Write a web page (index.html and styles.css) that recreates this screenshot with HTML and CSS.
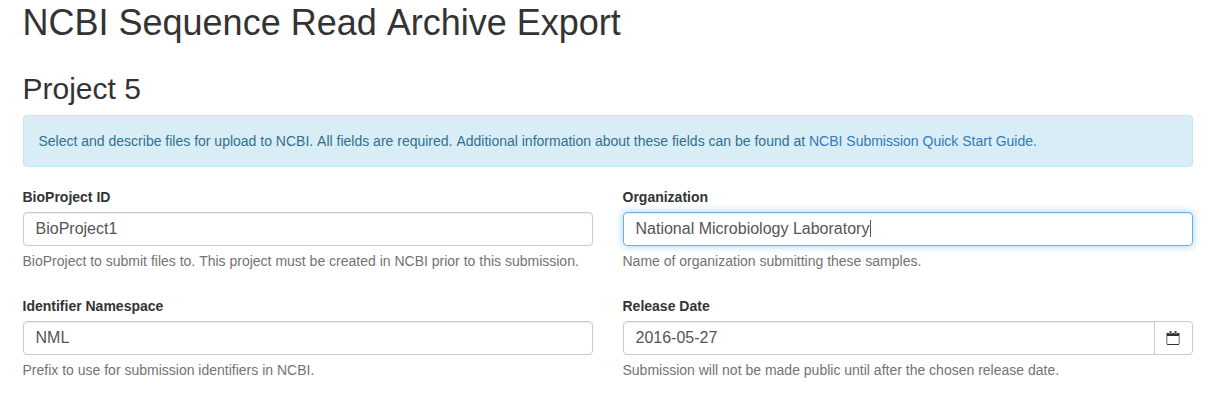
FILE: index.html
```html
<!DOCTYPE html>
<html lang="en">
<head>
<meta charset="utf-8">
<title>NCBI Sequence Read Archive Export</title>
<link rel="stylesheet" href="styles.css">
</head>
<body>
<main class="page">
  <h1>NCBI Sequence Read Archive Export</h1>
  <h2>Project 5</h2>
  <div class="alert">Select and describe files for upload to NCBI. All fields are required. Additional information about these fields can be found at <a href="#">NCBI Submission Quick Start Guide.</a></div>
  <form class="fields">
    <div class="group">
      <label>BioProject ID</label>
      <div class="control">BioProject1</div>
      <p class="help">BioProject to submit files to. This project must be created in NCBI prior to this submission.</p>
    </div>
    <div class="group">
      <label>Organization</label>
      <div class="control focused">National Microbiology Laboratory<span class="caret"></span></div>
      <p class="help">Name of organization submitting these samples.</p>
    </div>
    <div class="group">
      <label>Identifier Namespace</label>
      <div class="control">NML</div>
      <p class="help">Prefix to use for submission identifiers in NCBI.</p>
    </div>
    <div class="group">
      <label>Release Date</label>
      <div class="input-group">
        <div class="control">2016-05-27</div>
        <span class="addon"><svg width="14" height="14" viewBox="0 0 14 14"><path fill="#999" d="M0 3h2v10H0zM12 3h2v10h-2z"/><path fill="#fff" d="M1.500 5h11v8h-11z"/><path fill="#333" d="M1 2h12v3H1zM1 13h12v1H1z"/><path fill="#999" d="M0 2h1v3H0zM13 2h1v3h-1zM3 0h3v3H3zM8 0h3v3H8z"/><path fill="#555" d="M4 0h1v3H4zM9 0h1v3H9z"/></svg></span>
      </div>
      <p class="help">Submission will not be made public until after the chosen release date.</p>
    </div>
  </form>
</main>
</body>
</html>
```
FILE: styles.css
```css
* { box-sizing: border-box; }
body { margin: 0; background: #fff; color: #333; font: 14px/20px "Liberation Sans", Arial, sans-serif; font-kerning: none; }
.page { padding: 3px 24.5px 0 22.5px; }
h1, h2 { margin: 0; font-weight: 400; }
h1 { font-size: 36px; line-height: 39px; }
h2 { font-size: 30px; line-height: 33px; margin: 30px 0 10px; }
.alert { height: 52px; padding: 15px; border: 1px solid #bce8f1; border-radius: 4px; background: #d9edf7; color: #31708f; }
.alert a { color: #337ab7; text-decoration: none; }
.fields { display: grid; grid-template-columns: 1fr 1fr; column-gap: 30px; row-gap: 25px; margin-top: 20px; }
.group { min-width: 0; }
label { display: block; font-weight: 700; margin-bottom: 5px; }
.control { height: 34px; padding: 6px 12px; border: 1px solid #ccc; border-radius: 4px; box-shadow: inset 0 1px 1px rgba(0,0,0,.075); color: #555; font-size: 16px; white-space: nowrap; }
.focused { border-color: #66afe9; box-shadow: inset 0 1px 1px rgba(0,0,0,.075), 0 0 8px rgba(102,175,233,.6); }
.caret { display: inline-block; width: 1px; height: 17px; margin-left: 1px; background: #555; vertical-align: -3px; }
.help { margin: 5px 0 0; color: #737373; white-space: nowrap; }
.input-group { display: flex; }
.input-group .control { flex: 1; border-radius: 4px 0 0 4px; }
.addon { display: flex; align-items: center; justify-content: center; width: 39px; height: 34px; border: 1px solid #ccc; border-radius: 0 4px 4px 0; margin-left: -1px; background: #fff; }
```
